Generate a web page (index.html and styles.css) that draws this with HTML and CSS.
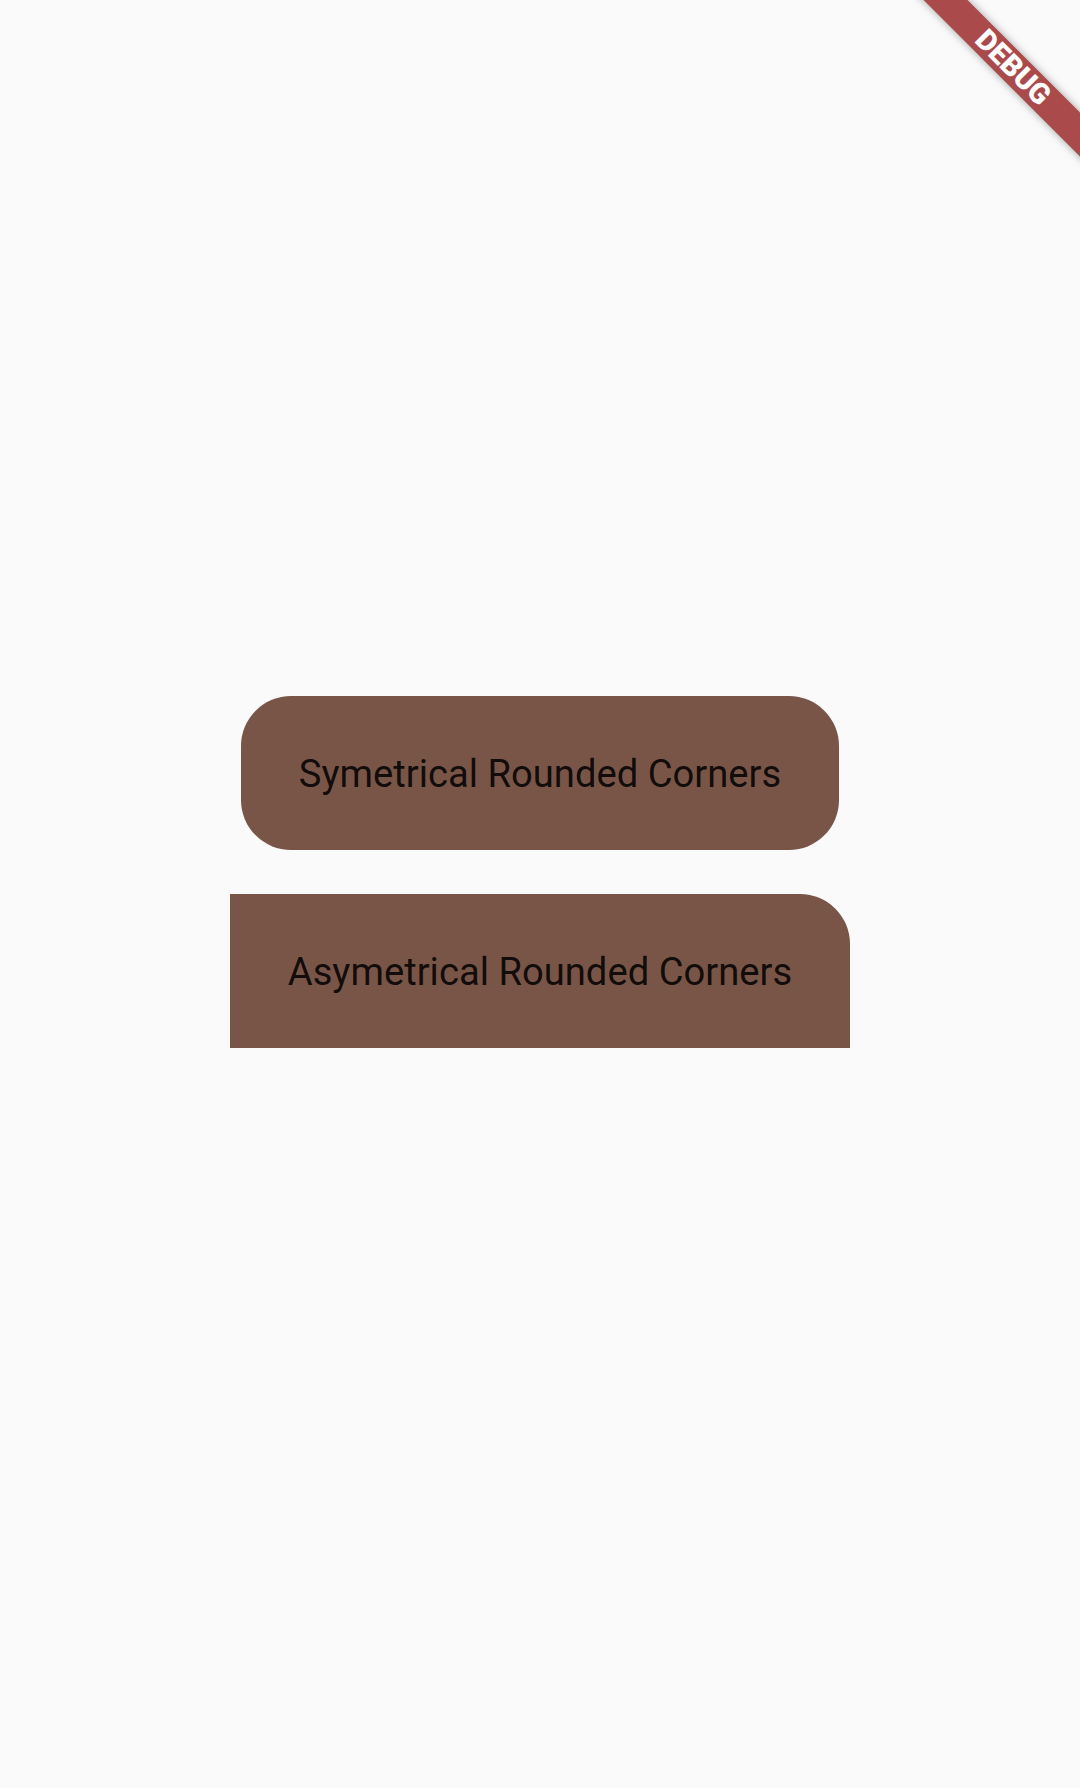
FILE: index.html
```html
<!DOCTYPE html>
<html>
<head>
<meta charset="utf-8">
<link rel="stylesheet" href="styles.css">
</head>
<body>
<main class="screen">
  <div class="stack">
    <button class="btn btn-sym">Symetrical Rounded Corners</button>
    <button class="btn btn-asym">Asymetrical Rounded Corners</button>
  </div>
</main>
<div class="debug-banner"><span>DEBUG</span></div>
</body>
</html>
```
FILE: styles.css
```css
html, body {
  margin: 0;
  padding: 0;
  background: #fafafa;
}
body {
  width: 1080px;
  height: 1788px;
  overflow: hidden;
  position: relative;
  font-family: Roboto, "Noto Sans", sans-serif;
}
.screen {
  height: 1788px;
  box-sizing: border-box;
  padding-bottom: 44px;
  display: flex;
  align-items: center;
  justify-content: center;
}
.stack {
  display: flex;
  flex-direction: column;
  align-items: center;
  gap: 44px;
}
.btn {
  border: none;
  margin: 0;
  background: #795548;
  color: rgba(0, 0, 0, 0.87);
  font-family: Roboto, sans-serif;
  font-size: 38.2px;
  font-weight: 400;
  height: 154px;
  padding: 1px 58px 0;
  display: flex;
  align-items: center;
  justify-content: center;
  white-space: nowrap;
}
.btn-sym {
  border-radius: 50px;
}
.btn-asym {
  border-radius: 0 50px 0 0;
}
.debug-banner {
  position: absolute;
  left: 863px;
  top: 52px;
  width: 300px;
  height: 31px;
  background: #ab4a4a;
  transform: rotate(45deg);
  box-shadow: 0 0 8px rgba(0, 0, 0, 0.35);
  display: flex;
  align-items: center;
  justify-content: center;
}
.debug-banner span {
  color: #ffffff;
  font-family: Roboto, sans-serif;
  font-weight: 900;
  font-size: 29px;
  line-height: 1;
}
```
